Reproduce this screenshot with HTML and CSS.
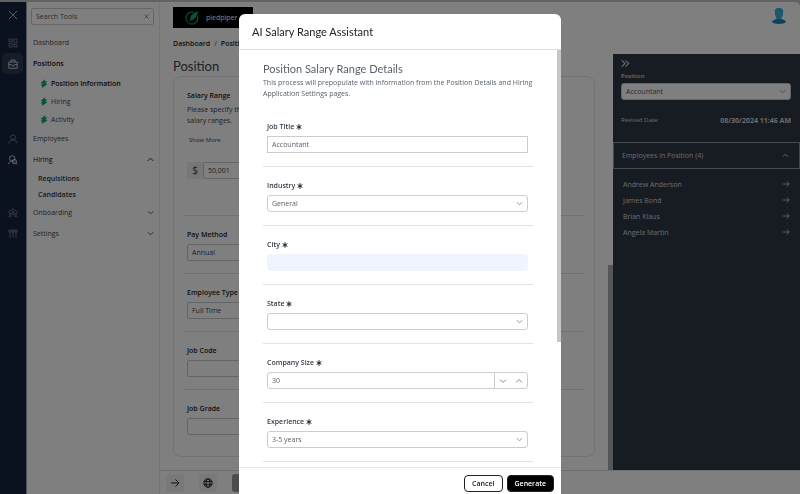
FILE: index.html
```html
<!DOCTYPE html>
<html lang="en">
<head>
<meta charset="utf-8">
<title>Position</title>
<link rel="stylesheet" href="styles.css">
</head>
<body>
<svg class="defs" aria-hidden="true">
  <symbol id="down" viewBox="0 0 8 8"><path d="M1 2.5 4 5.5 7 2.5"/></symbol>
  <symbol id="up" viewBox="0 0 8 8"><path d="M1 5.5 4 2.5 7 5.5"/></symbol>
  <symbol id="right" viewBox="0 0 10 10"><path d="M1 5H9M5.800 1.800 9 5 5.800 8.200"/></symbol>
  <symbol id="star" viewBox="0 0 6 6"><path d="M3 .2V5.8M.6 1.6 5.4 4.4M5.4 1.6.6 4.4"/></symbol>
  <symbol id="bolt" viewBox="0 0 8 9"><path d="M5.2.2.6 3.8 2.6 4.6.4 6.600 2.200 6.600 2 8.900 7.400 5.200 5.400 4.300 7.600 2.400 5.200 2.400Z"/></symbol>
</svg>

<div class="app">
  <nav class="rail" aria-label="Main">
    <button class="rail-btn close" aria-label="Close menu"><svg viewBox="0 0 10 10"><path d="M1 1 9 9M9 1 1 9"/></svg></button>
    <button class="rail-btn" aria-label="Dashboard"><svg viewBox="0 0 10 10"><path d="M1 1H4.2V3.6H1ZM5.8 1H9V5H5.8ZM1 5.4H4.2V9H1ZM5.8 6.6H9V9H5.8Z"/></svg></button>
    <button class="rail-btn active" aria-label="Positions"><svg viewBox="0 0 10 10"><path d="M.8 3H9.2V9.2H.8ZM3 3V1H7V3M.8 5.6H3.6L4.2 6.8H5.8L6.4 5.6H9.2"/></svg></button>
    <button class="rail-btn people" aria-label="Employees"><svg viewBox="0 0 10 10"><circle cx="5" cy="3.4" r="2.5"/><path d="M1 9.4C1.2 7 2.6 6 5 6S8.800 7 9 9.400"/></svg></button>
    <button class="rail-btn lit" aria-label="Hiring"><svg viewBox="0 0 10 10"><circle cx="4.200" cy="3.400" r="2.700"/><path d="M.6 9.200C.8 7 2 6.200 3.600 6.200"/><circle cx="6.400" cy="6.600" r="2.200"/><path d="M8 8.200 9.500 9.700M5.400 6.600 6.200 7.400 7.500 6"/></svg></button>
    <button class="rail-btn home" aria-label="Onboarding"><svg viewBox="0 0 12 10"><path d="M.5 4.500 6 .8 11.500 4.500M6 3.300A1 1 0 0 1 6 5.300 1 1 0 0 1 6 3.300M3.200 5A.9.9 0 0 1 3.200 6.800.9.9 0 0 1 3.200 5M8.800 5A.9.9 0 0 1 8.800 6.800.9.9 0 0 1 8.800 5M1.200 9.200C1.500 7.500 4.500 7.500 4.600 9.200M7.400 9.200C7.500 7.500 10.500 7.500 10.800 9.200M4.500 7.500C4.800 6 7.200 6 7.500 7.500"/></svg></button>
    <button class="rail-btn" aria-label="Settings"><svg viewBox="0 0 10 10"><path d="M.8 1H3.200V3H.8ZM3.800 1H6.200V3H3.800ZM6.800 1H9.200V3H6.800ZM2 3V9M5 3V9M8 3V9"/></svg></button>
  </nav>

  <aside class="sidebar">
    <div class="search">
      <input type="text" placeholder="Search Tools" aria-label="Search Tools">
      <button aria-label="Clear search"><svg class="line" viewBox="0 0 8 8"><path d="M1 1 7 7M7 1 1 7"/></svg></button>
    </div>
    <a class="item" href="#">Dashboard</a>
    <a class="item strong" href="#">Positions</a>
    <div class="tools">
      <a class="strong" href="#"><svg><use href="#bolt"/></svg>Position Information</a>
      <a href="#"><svg><use href="#bolt"/></svg>Hiring</a>
      <a href="#"><svg><use href="#bolt"/></svg>Activity</a>
    </div>
    <a class="item" href="#">Employees</a>
    <a class="item medium" href="#">Hiring<svg class="line"><use href="#up"/></svg></a>
    <div class="children">
      <a href="#">Requisitions</a>
      <a href="#">Candidates</a>
    </div>
    <a class="item" href="#">Onboarding<svg class="line"><use href="#down"/></svg></a>
    <a class="item" href="#">Settings<svg class="line"><use href="#down"/></svg></a>
  </aside>

  <div class="page">
    <header class="topbar">
      <div class="brand">
        <svg class="mark" viewBox="0 0 14 14"><circle cx="6.500" cy="7.500" r="5.600"/><path class="leaf" d="M12.800.8C7.500 2 4.200 5 4.400 9L1.800 13 5.600 10.200C9.500 9 11.500 6 12.800.8Z"/></svg>
        <span>piedpiper</span>
      </div>
      <svg class="avatar" viewBox="0 0 16 18"><path class="body" d="M1 15C1.500 12.500 5.500 13 6 11H10C10.500 13 14.500 12.500 15 15 13.500 17.500 2.500 17.500 1 15Z"/><path class="head" d="M3.800 3.500C4.300-.3 11.700-.3 12.200 3.500L12 7.500C11.500 10.500 9.500 12.500 8 12.500S4.500 10.500 4 7.500Z"/></svg>
    </header>

    <div class="content">
      <main class="main">
        <nav class="crumbs" aria-label="Breadcrumb"><a href="#">Dashboard</a><span>/</span><a href="#">Position</a></nav>
        <h1>Position</h1>
        <section class="card">
          <div class="block salary">
            <label for="salary">Salary Range</label>
            <p>Please specify the<br>salary ranges.</p>
            <a class="more" href="#">Show More</a>
            <div class="money"><span>$</span><input id="salary" type="text" value="50,001"></div>
          </div>
          <div class="block"><label for="pay">Pay Method</label><select id="pay"><option>Annual</option></select></div>
          <div class="block"><label for="type">Employee Type</label><select id="type"><option>Full Time</option></select></div>
          <div class="block"><label for="code">Job Code</label><input id="code" type="text"></div>
          <div class="block"><label for="grade">Job Grade</label><input id="grade" type="text"></div>
        </section>
        <div class="page-scroll"></div>
      </main>

      <aside class="details">
        <div class="summary">
          <button class="collapse" aria-label="Collapse panel"><svg viewBox="0 0 10 10"><path d="M1 1.500 4.500 5 1 8.500M5 1.500 8.500 5 5 8.500"/></svg></button>
          <label for="position">Position</label>
          <div class="pick"><select id="position"><option>Accountant</option></select><svg class="line"><use href="#down"/></svg></div>
          <div class="revised"><span>Revised Date:</span><strong>08/30/2024 11:46 AM</strong></div>
        </div>
        <button class="group">Employees in Position (4)<svg class="line"><use href="#up"/></svg></button>
        <div class="people-list">
          <a href="#">Andrew Anderson<svg><use href="#right"/></svg></a>
          <a href="#">James Bond<svg><use href="#right"/></svg></a>
          <a href="#">Brian Klaus<svg><use href="#right"/></svg></a>
          <a href="#">Angela Martin<svg><use href="#right"/></svg></a>
        </div>
      </aside>
    </div>

    <footer class="actions">
      <button aria-label="Next"><svg viewBox="0 0 10 10"><path d="M1 5H9M5.500 1.500 9 5 5.500 8.500"/></svg></button>
      <button aria-label="Language"><svg viewBox="0 0 10 10"><circle cx="5" cy="5" r="4.200"/><ellipse cx="5" cy="5" rx="2" ry="4.200"/><path d="M1 3.600H9M1 6.400H9"/></svg></button>
      <button class="save" aria-label="Save"></button>
    </footer>
  </div>
</div>

<div class="overlay">
  <form class="dialog" role="dialog" aria-labelledby="dialog-title">
    <h2 id="dialog-title">AI Salary Range Assistant</h2>
    <div class="dialog-body">
      <h3>Position Salary Range Details</h3>
      <p>This process will prepopulate with information from the Position Details and Hiring Application Settings pages.</p>
      <div class="field first"><label for="f-title">Job Title<svg><use href="#star"/></svg></label><div class="pick"><input class="square" id="f-title" type="text" value="Accountant"></div></div>
      <div class="field"><label for="f-industry">Industry<svg><use href="#star"/></svg></label><div class="pick"><select id="f-industry"><option>General</option></select><svg class="line"><use href="#down"/></svg></div></div>
      <div class="field"><label for="f-city">City<svg><use href="#star"/></svg></label><div class="pick"><input class="filled" id="f-city" type="text"></div></div>
      <div class="field"><label for="f-state">State<svg><use href="#star"/></svg></label><div class="pick"><select id="f-state"><option></option></select><svg class="line"><use href="#down"/></svg></div></div>
      <div class="field"><label for="f-size">Company Size<svg><use href="#star"/></svg></label>
        <div class="stepper"><input id="f-size" type="text" value="30"><button type="button" aria-label="Decrease"><svg class="line"><use href="#down"/></svg></button><button type="button" aria-label="Increase"><svg class="line"><use href="#up"/></svg></button></div></div>
      <div class="field"><label for="f-exp">Experience<svg><use href="#star"/></svg></label><div class="pick"><select id="f-exp"><option>3-5 years</option></select><svg class="line"><use href="#down"/></svg></div></div>
      <div class="dialog-scroll"></div>
    </div>
    <div class="dialog-foot"><button type="button">Cancel</button><button type="submit" class="primary">Generate</button></div>
  </form>
</div>
</body>
</html>
```

FILE: styles.css
```css
* { box-sizing: border-box; }
body {
  margin: 0;
  height: 100vh;
  overflow: hidden;
  background: #c4c4c6;
  color: #3c4450;
  font: 7px/11px "Open Sans", "Liberation Sans", sans-serif;
}
button, input, select { font: inherit; color: inherit; margin: 0; border: 0; padding: 0; background: none; appearance: none; border-radius: 0; }
a { color: inherit; text-decoration: none; }
h1, h2, h3, p { margin: 0; font-weight: 400; }
h1, h2, h3 { font-family: Lato, "Liberation Sans", sans-serif; }
svg { fill: none; stroke: currentColor; flex: none; }
.defs { position: absolute; width: 0; height: 0; }
.line { width: 7px; height: 7px; stroke-width: 1; }

.app { display: flex; height: 100vh; padding-top: 2px; }

/* Icon rail */
.rail { width: 27px; flex: none; display: flex; flex-direction: column; padding: 2px 4px 0 2px; background: #16243e; border-right: 1px solid #a0a5b0; color: #7d8698; }
.rail-btn { height: 21px; width: 21px; flex: none; display: grid; place-items: center; border-radius: 5px; }
.rail-btn svg { width: 10px; height: 10px; stroke-width: 0.8; }
.rail-btn.close { margin-bottom: 7px; color: #d5d9e0; }
.rail-btn.active { background: #2c3850; color: #e8ebf0; }
.rail-btn.people { margin-top: 54px; }
.rail-btn.lit { color: #e8ebf0; }
.rail-btn.home { margin-top: 32px; }
.rail-btn.home svg { width: 12px; }

/* Tool list */
.sidebar { width: 133px; flex: none; padding: 6px 5px 0 4px; background: #fff; border-right: 1px solid #ebebeb; color: #3f4753; }
.search { display: flex; align-items: center; height: 17px; margin-bottom: 7px; padding: 0 4px; border: 1px solid #ccc; border-radius: 2px; }
.search input { flex: 1; min-width: 0; }
.search input::placeholder { color: #555; opacity: 1; }
.search svg { width: 5px; height: 5px; display: block; }
.item { display: flex; justify-content: space-between; align-items: center; height: 21px; padding: 0 0 0 2px; }
.strong { font-weight: 600; color: #111; }
.medium { font-weight: 500; color: #111; }
.tools a { display: flex; align-items: center; gap: 3px; height: 18px; padding-left: 9px; }
.tools svg { width: 8px; height: 9px; fill: #12a56a; stroke: none; }
.children a { display: flex; align-items: center; height: 16px; padding-left: 7px; font-weight: 600; color: #333; }

/* Page */
.page { flex: 1; min-width: 0; display: flex; flex-direction: column; background: #fff; border-top-right-radius: 5px; }
.topbar { display: flex; justify-content: space-between; align-items: flex-start; height: 32px; padding: 5px 13px 0 13px; }
.brand { display: flex; align-items: center; gap: 6px; width: 80px; height: 21px; padding-left: 12px; background: #000; color: #fff; }
.mark { width: 15px; height: 15px; stroke: #12a56a; }
.mark .leaf { stroke: #000; stroke-width: 0.8; fill: #12a56a; }
.avatar { width: 16px; height: 18px; stroke: none; }
.avatar .body { fill: #1886b4; }
.avatar .head { fill: #39aede; }
.content { flex: 1; min-height: 0; display: flex; }
.main { flex: 1; min-width: 0; position: relative; padding: 4px 18px 0 13px; overflow: hidden; }
.crumbs { display: flex; gap: 4px; font-weight: 600; color: #222; }
.crumbs span { color: #777; }
h1 { margin-top: 8px; font-size: 13px; line-height: 18px; }
.card { margin-top: 1px; padding: 0 10px 20px; border: 1px solid #e6e6e6; border-radius: 8px; }
.block { height: 58px; padding: 13px 3px 0; border-bottom: 1px solid #e2e2e2; }
.block:last-child { border: 0; height: 46px; }
.block.salary { height: 139px; }
.block label { display: block; height: 15px; font-weight: 600; color: #222; }
.block.salary label { height: 14px; }
.block input, .block select { display: block; width: 75%; height: 17px; padding: 0 4px; border: 1px solid #c8c8c8; border-radius: 2px; }
.more { display: block; margin: 9px 2px 16px; font-size: 6px; }
.money { display: flex; height: 17px; }
.money span { width: 16px; background: #eceef3; text-align: center; font-size: 10px; line-height: 17px; }
.page-scroll { position: absolute; right: 0; bottom: 0; width: 5px; height: 47%; background: #aaadb1; }

/* Right panel */
.details { width: 187px; flex: none; margin-top: 20px; background: #2e3844; color: #d4d8de; }
.summary { padding: 5px 9px 16px 8px; }
.collapse { display: block; width: 9px; height: 9px; }
.collapse svg { display: block; width: 9px; height: 9px; stroke-width: 1.2; }
.summary label { display: block; margin: 3px 0 1px; font-size: 6px; font-weight: 600; }
.details select { background: #fff; border-color: #fff; color: #555; }
.revised { display: flex; justify-content: space-between; align-items: center; margin-top: 15px; font-size: 6px; }
.revised strong { font-size: 7px; }
.group { display: flex; justify-content: space-between; align-items: center; width: 100%; height: 27px; padding: 0 10px 0 8px; border: 1px solid #8a9099; }
.people-list { padding: 7px 10px 0; }
.people-list a { display: flex; justify-content: space-between; align-items: center; height: 16px; }
.people-list svg { width: 8px; height: 8px; }

.actions { height: 24px; flex: none; display: flex; align-items: center; gap: 15px; padding: 0 6px; border-top: 1px solid #ddd; }
.actions button { width: 18px; height: 18px; display: grid; place-items: center; border-radius: 3px; background: #f3f3f5; color: #222; }
.actions svg { width: 10px; height: 10px; }
.actions .save { width: 50px; background: #999; }

/* Shared inputs */
.pick { display: grid; align-items: center; }
.pick > * { grid-area: 1 / 1; }
.pick input, .pick select { width: 100%; height: 17px; padding: 0 4px; border: 1px solid #ccc; border-radius: 3px; }
.pick > .line { justify-self: end; margin-right: 5px; color: #888; pointer-events: none; }
.pick .square { border-radius: 0; }
.pick .filled { background: #eff4ff; border-color: #eff4ff; }

/* Dialog */
.overlay { position: fixed; inset: 0; display: flex; justify-content: center; padding-top: 14px; background: rgba(0, 0, 0, 0.5); }
.dialog { width: 322px; max-width: 100%; display: flex; flex-direction: column; background: #fff; border-radius: 6px 6px 0 0; overflow: hidden; }
.dialog h2 { flex: none; padding: 9px 13px 8px; border-bottom: 1px solid #ddd; font-size: 11px; line-height: 18px; color: #222; }
.dialog-body { flex: 1; min-height: 0; position: relative; padding: 11px 28px 0 24px; overflow: hidden; color: #59626c; }
.dialog h3 { font-size: 11px; line-height: 16px; }
.field { height: 59px; padding: 13px 5px 0 4px; border-bottom: 1px solid #e2e2e2; }
.field.first { height: 68px; padding-top: 22px; }
.field label { display: flex; align-items: center; gap: 2px; height: 15px; padding-bottom: 4px; font-weight: 600; color: #333b47; }
.field label svg { width: 6px; height: 6px; color: #222; }
.stepper { display: flex; height: 17px; border: 1px solid #ccc; border-radius: 3px; }
.stepper input { flex: 1; min-width: 0; padding: 0 4px; border-right: 1px solid #ccc; }
.stepper button { width: 16px; display: grid; place-items: center; color: #888; }
.stepper .line { width: 8px; height: 8px; }
.dialog-scroll { position: absolute; top: 0; right: 0; width: 4px; height: 70%; background: #c3c7c7; }
.dialog-foot { flex: none; height: 27px; display: flex; justify-content: flex-end; align-items: center; gap: 4px; padding: 4px 7px 0; border-top: 1px solid #e6e6e6; }
.dialog-foot button { height: 17px; padding: 0 7px; border: 1px solid #222; border-radius: 4px; font-weight: 600; color: #222; }
.dialog-foot .primary { background: #000; color: #fff; }
```
